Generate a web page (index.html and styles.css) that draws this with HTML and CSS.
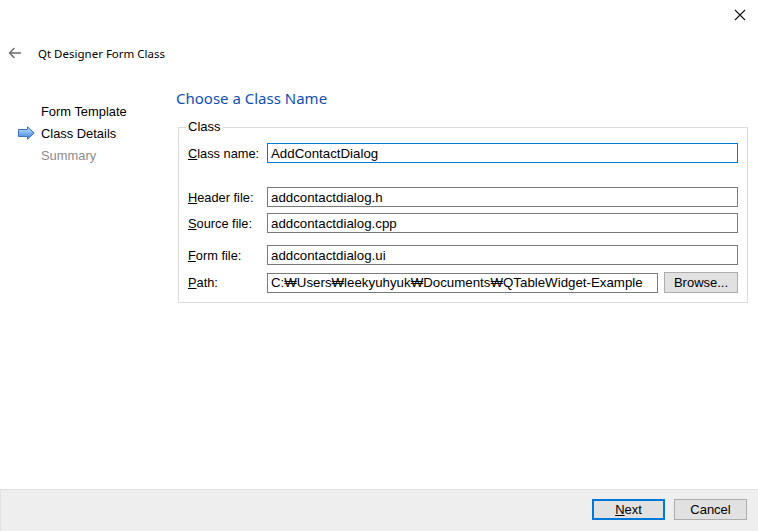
FILE: index.html
```html
<!DOCTYPE html>
<html>
<head>
<meta charset="utf-8">
<link rel="stylesheet" href="styles.css">
</head>
<body>
<div class="window">
  <div class="topbar">
    <button class="close" aria-label="Close">
      <svg width="12" height="12" viewBox="0 0 12 12"><path d="M1 1L11 11M11 1L1 11" stroke="#111" stroke-width="1.1" fill="none"/></svg>
    </button>
  </div>
  <div class="titlebar">
    <svg class="back" width="14" height="12" viewBox="0 0 14 12"><path d="M13 6H1.5M6.5 1L1.5 6L6.5 11" stroke="#6b6b6b" stroke-width="1.4" fill="none"/></svg>
    <span class="title">Qt Designer Form Class</span>
  </div>
  <div class="main">
    <ul class="steps">
      <li class="step"><span class="marker"></span>Form Template</li>
      <li class="step current"><span class="marker">
        <svg width="17" height="14" viewBox="0 0 17 14">
          <defs><linearGradient id="ag" x1="0" y1="0" x2="0" y2="1"><stop offset="0" stop-color="#c9e2fb"/><stop offset="0.5" stop-color="#7fb3ef"/><stop offset="1" stop-color="#3f7fd6"/></linearGradient></defs>
          <path d="M0.5 3.5H9.5V0.8L16.2 7L9.5 13.2V10.5H0.5Z" fill="url(#ag)" stroke="#3c6fc0" stroke-width="1"/>
        </svg></span>Class Details</li>
      <li class="step pending"><span class="marker"></span>Summary</li>
    </ul>
    <div class="content">
      <h1 class="heading">Choose a Class Name</h1>
      <fieldset class="group">
        <legend class="group-title">Class</legend>
        <div class="row row-class">
          <label class="label"><u>C</u>lass name:</label>
          <input class="field focused" type="text" value="AddContactDialog">
        </div>
        <div class="row row-header">
          <label class="label"><u>H</u>eader file:</label>
          <input class="field" type="text" value="addcontactdialog.h">
        </div>
        <div class="row row-source">
          <label class="label"><u>S</u>ource file:</label>
          <input class="field" type="text" value="addcontactdialog.cpp">
        </div>
        <div class="row row-form">
          <label class="label"><u>F</u>orm file:</label>
          <input class="field" type="text" value="addcontactdialog.ui">
        </div>
        <div class="row row-path">
          <label class="label"><u>P</u>ath:</label>
          <input class="field" type="text" value="C:₩Users₩leekyuhyuk₩Documents₩QTableWidget-Example">
          <button class="btn browse">Browse...</button>
        </div>
      </fieldset>
    </div>
  </div>
  <div class="footer">
    <button class="btn default"><u>N</u>ext</button>
    <button class="btn">Cancel</button>
  </div>
</div>
</body>
</html>
```
FILE: styles.css
```css
html, body {
  margin: 0;
  padding: 0;
  background: #ffffff;
}
.window {
  width: 758px;
  height: 531px;
  display: flex;
  flex-direction: column;
  background: #ffffff;
  font-family: "Liberation Sans", Arial, sans-serif;
  font-size: 13px;
  color: #000;
  overflow: hidden;
}
.topbar {
  height: 30px;
  display: flex;
  justify-content: flex-end;
}
.close {
  width: 46px;
  height: 30px;
  border: none;
  background: transparent;
  padding: 0;
  margin-right: -5px;
  display: flex;
  align-items: center;
  justify-content: center;
}
.close svg { display: block; }
.titlebar {
  height: 46px;
  display: flex;
  align-items: center;
  padding-left: 8px;
  gap: 16px;
}
.back { display: block; }
.title {
  font-family: "Noto Sans", sans-serif;
  font-size: 11.5px;
  color: #000;
}
.main {
  flex: 1;
  display: flex;
}
.steps {
  list-style: none;
  margin: 0;
  padding: 24px 0 0 18px;
  width: 158px;
}
.step {
  height: 22px;
  display: flex;
  align-items: center;
  font-size: 12.9px;
}
.marker {
  width: 23px;
  display: flex;
  align-items: center;
}
.marker svg { display: block; }
.pending { color: #8c8c8c; }
.content {
  flex: 1;
  padding-right: 10px;
}
.heading {
  margin: 12px 0 0 0;
  height: 20px;
  line-height: 20px;
  font-family: "Noto Sans", sans-serif;
  font-weight: normal;
  font-size: 15px;
  color: #0f4fb4;
}
.group {
  margin: 11px 0 0 2px;
  border: 1px solid #dcdcdc;
  padding: 8px 9px 9px 9px;
  min-width: 0;
}
.group-title {
  padding: 0 2px;
  margin-left: -2px;
  line-height: 16px;
  font-size: 13px;
}
.row {
  display: flex;
  align-items: center;
  height: 20px;
}
.row-header { margin-top: 24px; }
.row-source { margin-top: 6px; }
.row-form { margin-top: 12px; }
.row-path { margin-top: 7px; height: 21px; }
.label {
  width: 79px;
  flex: none;
  font-size: 12.8px;
}
.field {
  flex: 1;
  min-width: 0;
  height: 20px;
  box-sizing: border-box;
  border: 1px solid #7a7a7a;
  padding: 0 3px;
  margin: 0;
  font-family: "Liberation Sans", Arial, sans-serif;
  font-size: 13.3px;
  color: #000;
  background: #fff;
  outline: none;
}
.field.focused { border-color: #0078d7; }
.btn {
  box-sizing: border-box;
  height: 21px;
  width: 73px;
  border: 1px solid #adadad;
  background: #e1e1e1;
  font-family: "Liberation Sans", Arial, sans-serif;
  font-size: 13px;
  color: #000;
  padding: 0;
  margin: 0;
}
.browse {
  width: 74px;
  margin-left: 6px;
  flex: none;
}
.default { border: 2px solid #0078d7; }
.footer {
  height: 32px;
  border-top: 1px solid #dfdfdf;
  border-left: 1px solid #e2e2e2;
  box-sizing: content-box;
  background: #eeeeee;
  display: flex;
  align-items: flex-start;
  justify-content: flex-end;
  gap: 9px;
  padding: 9px 11px 0 0;
}
```
